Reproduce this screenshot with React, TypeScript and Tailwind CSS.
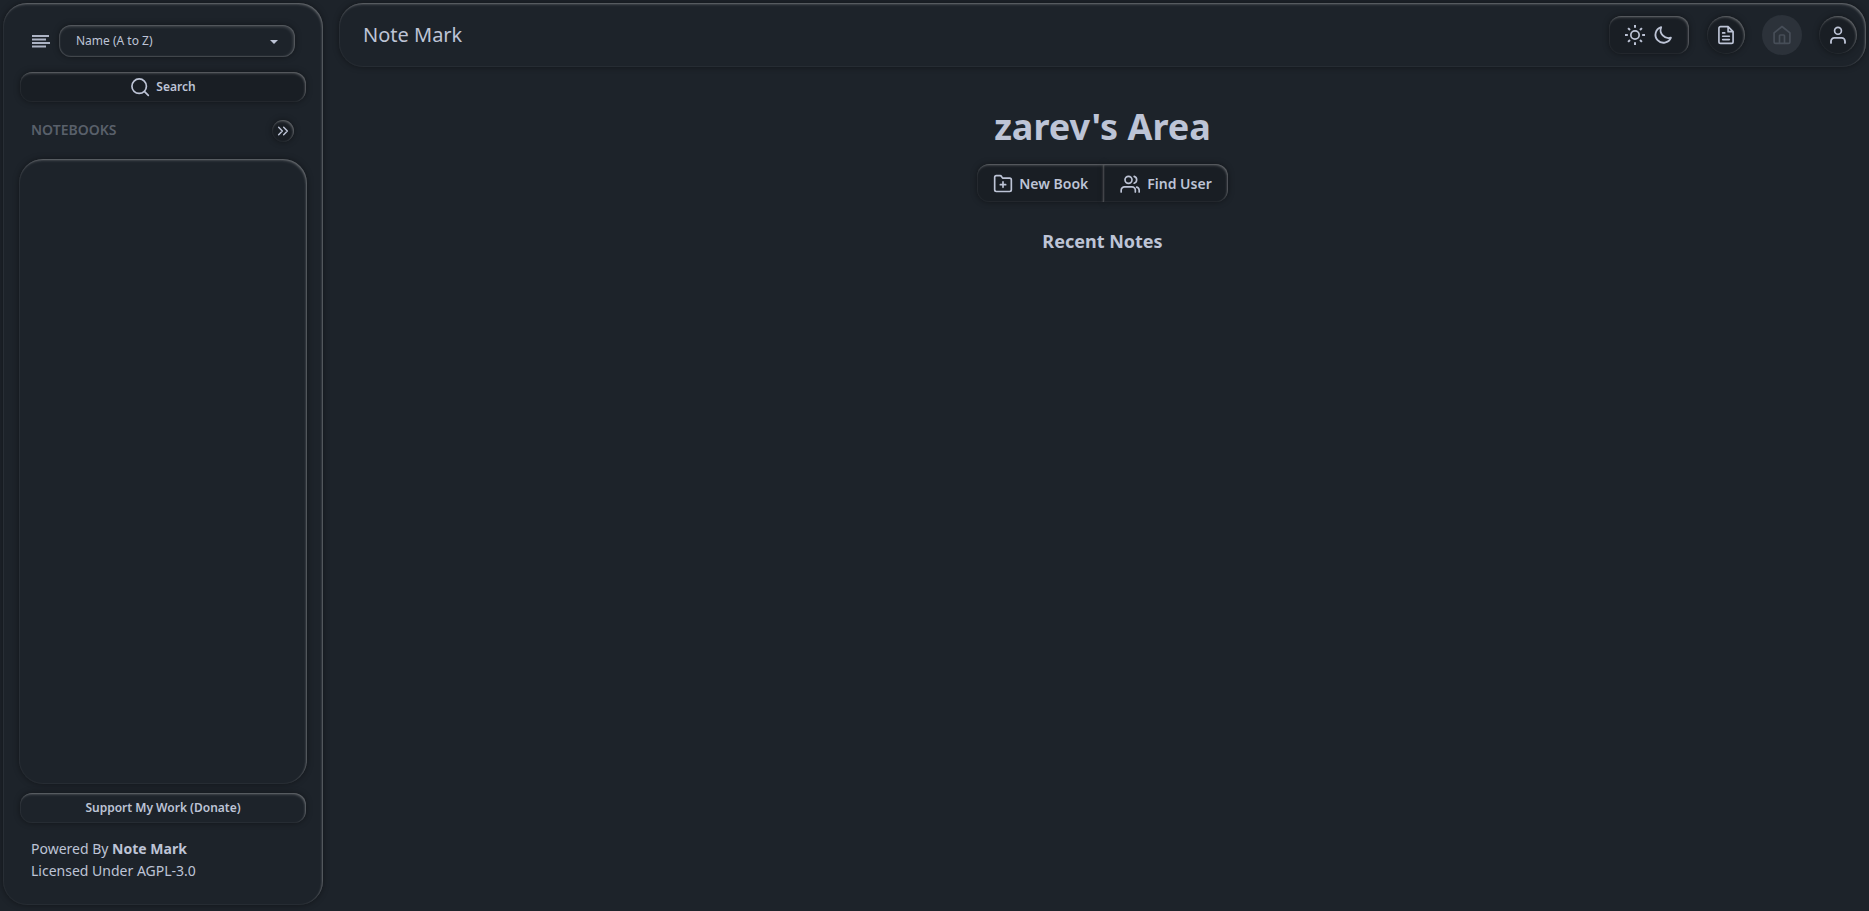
import type { ReactNode } from "react";

const raised =
  "shadow-[0_0_6px_rgba(0,0,0,0.4),inset_-1px_1px_2px_rgba(255,255,255,0.22),inset_-1px_2px_3px_rgba(255,255,255,0.1),inset_0_0_1px_1px_rgba(255,255,255,0.04)]";

const raisedStrong =
  "shadow-[0_0_6px_rgba(0,0,0,0.4),inset_0_0_1px_1px_rgba(255,255,255,0.13),inset_-1px_1px_3px_1px_rgba(255,255,255,0.16)]";

function Icon({ className = "size-5", children }: { className?: string; children: ReactNode }) {
  return (
    <svg
      viewBox="0 0 24 24"
      className={className}
      fill="none"
      stroke="currentColor"
      strokeWidth="2"
      strokeLinecap="round"
      strokeLinejoin="round"
      aria-hidden="true"
    >
      {children}
    </svg>
  );
}

function Sidebar() {
  return (
    <aside className={`flex w-80 shrink-0 flex-col rounded-3xl px-4 pt-[22px] pb-[23px] ${raised}`}>
      <div className="flex items-center gap-[9px] pr-3 pl-[13px]">
        <label htmlFor="sort" className="shrink-0" aria-label="Sort notebooks">
          <svg viewBox="0 0 18 14" className="h-3.5 w-[18px] opacity-90" fill="none" stroke="currentColor" strokeWidth="1.8" aria-hidden="true">
            <path d="M0 2h17M0 5.5h14M0 9h18M0 12.5h14" />
          </svg>
        </label>
        <div className="relative flex-1">
          <select
            id="sort"
            className={`block h-8 w-full appearance-none rounded-xl bg-[#1d232a] px-[17px] text-xs outline-none ${raisedStrong}`}
          >
            <option>Name (A to Z)</option>
            <option>Name (Z to A)</option>
          </select>
          <svg viewBox="0 0 8 4" className="pointer-events-none absolute top-[15px] right-[17px] h-1 w-2" fill="currentColor" aria-hidden="true">
            <path d="M0 0h8L4 4z" />
          </svg>
        </div>
      </div>
      <button
        type="button"
        className={`mx-px mt-[15px] flex h-[30px] shrink-0 items-center justify-center gap-1.5 rounded-xl bg-[#191e24] text-xs font-semibold ${raised}`}
      >
        <Icon className="size-5">
          <circle cx="11" cy="11" r="8.7" />
          <path d="m17.5 17.5 4.5 4.5" />
        </Icon>
        Search
      </button>
      <div className="mt-[18px] flex items-start justify-between pr-[13px] pl-3">
        <h2 className="text-sm font-semibold text-[#59606a]">NOTEBOOKS</h2>
        <button
          type="button"
          aria-label="Expand notebooks"
          className={`flex size-[22px] items-center justify-center rounded-full bg-[#191e24] ${raised}`}
        >
          <Icon className="size-4">
            <path strokeWidth="2.2" d="m5.5 6.5 5.5 5.5-5.5 5.5M13 6.5l5.5 5.5-5.5 5.5" />
          </Icon>
        </button>
      </div>
      <div className={`mt-[17px] flex-1 rounded-3xl ${raised}`} />
      <button
        type="button"
        className={`mx-px mt-[9px] h-[30px] shrink-0 rounded-xl text-xs font-semibold ${raised}`}
      >
        Support My Work (Donate)
      </button>
      <footer className="mt-[15px] px-3 text-sm leading-[22px]">
        <p>
          Powered By <span className="font-bold">Note Mark</span>
        </p>
        <p>Licensed Under AGPL-3.0</p>
      </footer>
    </aside>
  );
}

function Header() {
  return (
    <header className={`flex h-16 items-center justify-between rounded-3xl pr-[9px] pl-6 ${raised}`}>
      <span className="text-xl">Note Mark</span>
      <div className="flex items-center gap-[17px]">
        <button
          type="button"
          aria-label="Toggle theme"
          className={`flex h-[38px] w-20 items-center justify-center gap-2 rounded-xl bg-[#191e24] ${raised}`}
        >
          <Icon>
            <circle cx="12" cy="12" r="5" />
            <path strokeLinecap="butt" strokeWidth="2.4" d="M12 0v3.4M12 20.6V24M0 12h3.4M20.6 12H24M3.7 3.7 6 6M18 18l2.3 2.3M3.7 20.3 6 18M18 6l2.3-2.3" />
          </Icon>
          <Icon>
            <path strokeWidth="2.2" d="M21.5 15.2A9.6 9.6 0 1 1 9.8 2.5a9.6 9.6 0 0 0 11.7 12.7z" />
          </Icon>
        </button>
        <a
          href="#notes"
          aria-label="Notes"
          className={`ml-px flex size-[38px] items-center justify-center rounded-full bg-[#191e24] ${raised}`}
        >
          <Icon>
            <path d="M14.5 2H5.5a2 2 0 0 0-2 2v16a2 2 0 0 0 2 2h13a2 2 0 0 0 2-2V8zM14.5 2v6h6M8 9.5h2.5M8 13.5h8M8 17.5h8" />
          </Icon>
        </a>
        <button
          type="button"
          disabled
          aria-label="Home"
          className="flex size-10 items-center justify-center rounded-full bg-[#2c323a] text-[#474e58]"
        >
          <Icon>
            <path d="M2.5 9.5 12 1.8l9.5 7.7V20a2 2 0 0 1-2 2h-15a2 2 0 0 1-2-2z" />
            <path d="M9 22v-9a1 1 0 0 1 1-1h4a1 1 0 0 1 1 1v9" />
          </Icon>
        </button>
        <button
          type="button"
          aria-label="Account"
          className={`flex size-[38px] items-center justify-center rounded-full bg-[#191e24] ${raised}`}
        >
          <Icon>
            <circle cx="12" cy="7" r="4.1" />
            <path strokeWidth="2.2" d="M3.6 21.5v-2a4 4 0 0 1 4-4h8.8a4 4 0 0 1 4 4v2" />
          </Icon>
        </button>
      </div>
    </header>
  );
}

export default function App() {
  return (
    <div className="flex min-h-screen gap-4 bg-[#1d232a] px-[3px] pt-[3px] pb-1.5 font-['Noto_Sans',sans-serif] text-[#bdc4d6]">
      <Sidebar />
      <div className="flex min-w-0 flex-1 flex-col">
        <Header />
        <main className="flex flex-col items-center pt-10">
          <h1 className="text-4xl font-bold">zarev's Area</h1>
          <div className="mt-[17px] flex text-sm font-semibold">
            <button
              type="button"
              className={`flex h-[38px] items-center gap-1.5 rounded-l-xl bg-[#191e24] px-4 pt-0.5 ${raised}`}
            >
              <Icon>
                <path d="M2 19V4a2 2 0 0 1 2-2h4.5a2 2 0 0 1 1.7 1L11.5 5H20a2 2 0 0 1 2 2v12a2 2 0 0 1-2 2H4a2 2 0 0 1-2-2zM12 9.5v6.5M8.8 12.8h6.4" />
              </Icon>
              New Book
            </button>
            <button
              type="button"
              className={`flex h-[38px] items-center gap-[7px] rounded-r-xl bg-[#191e24] px-4 pt-0.5 ${raised}`}
            >
              <Icon>
                <circle cx="10.2" cy="7" r="4.2" />
                <path d="M1.4 21.5v-2a4 4 0 0 1 4-4h9a4 4 0 0 1 4 4v2M17 2.9a4.3 4.3 0 0 1 0 8.2M20 15.7a4 4 0 0 1 3 3.8v2" />
              </Icon>
              Find User
            </button>
          </div>
          <h2 className="mt-[25px] text-lg font-bold">Recent Notes</h2>
        </main>
      </div>
    </div>
  );
}
